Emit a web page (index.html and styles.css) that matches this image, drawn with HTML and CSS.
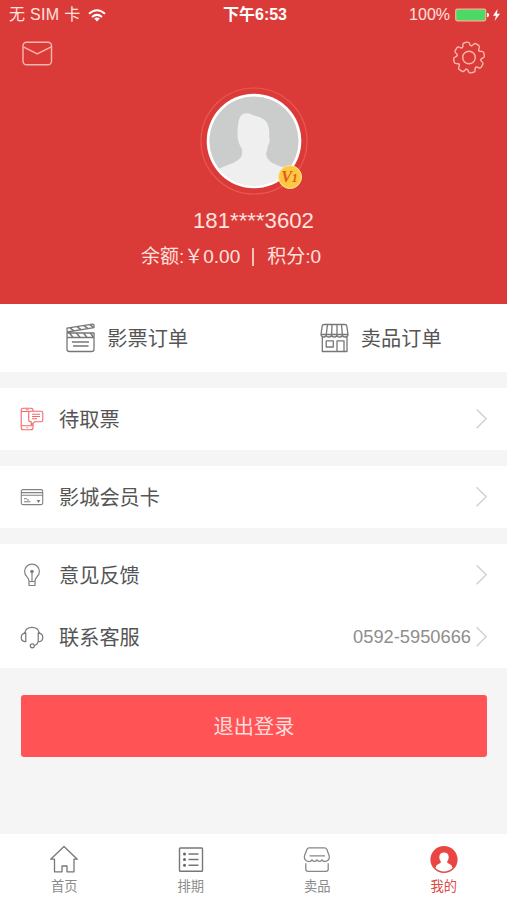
FILE: index.html
```html
<!DOCTYPE html>
<html lang="zh-CN">
<head>
<meta charset="utf-8">
<meta name="viewport" content="width=device-width">
<title>我的</title>
<link rel="stylesheet" href="styles.css">
</head>
<body>
<div class="app">
  <header class="hero">
    <div class="status">
      <div class="status-left">
        <span class="carrier">无 SIM 卡</span>
        <svg class="wifi" width="18" height="13" viewBox="0 0 18 13" fill="none" stroke="#fff" stroke-width="2">
          <path d="M1 4.8Q9-2.2 17 4.8M4 8Q9 3.7 14 8"/><path d="M6.2 9.6Q9 7.4 11.8 9.6L9 12.6Z" fill="#fff" stroke="none"/>
        </svg>
      </div>
      <div class="time">下午6:53</div>
      <div class="status-right">
        <span class="percent">100%</span>
        <svg width="46" height="14" viewBox="0 0 46 14">
          <rect x=".7" y="1.2" width="30" height="11.6" rx="1.5" fill="#4cd964" stroke="#f3b39a" stroke-width="1.2"/>
          <path d="M32 4.8q2.2.2 2.2 2.2T32 9.2z" fill="#fff"/>
          <path d="M42.5 1L38 7.8h3L39.6 13 45 5.8h-3z" fill="#fff"/>
        </svg>
      </div>
    </div>
    <div class="actions">
      <svg class="mail" width="31" height="25" viewBox="0 0 31 25" fill="none" stroke="#fbb5ae" stroke-width="1.4" stroke-linejoin="round">
        <rect x="1" y="1.3" width="28.5" height="22.5" rx="3.5"/><path d="M1.3 5.8L15.2 12.9 29.2 5.8"/>
      </svg>
      <svg class="gear" width="34" height="34" viewBox="-17 -17.5 34 34" fill="none" stroke="#fbb5ae" stroke-width="1.4" stroke-linecap="round">
        <defs><path id="tooth" d="M-4.6-11.1C-3-11.8-3.7-12.6-3.4-13.7Q-3-15.4-1.4-15.4H1.4Q3-15.4 3.4-13.7C3.7-12.6 3-11.8 4.6-11.1"/></defs>
        <g transform="rotate(-12)">
          <use href="#tooth"/><use href="#tooth" transform="rotate(45)"/><use href="#tooth" transform="rotate(90)"/><use href="#tooth" transform="rotate(135)"/>
          <use href="#tooth" transform="rotate(180)"/><use href="#tooth" transform="rotate(225)"/><use href="#tooth" transform="rotate(270)"/><use href="#tooth" transform="rotate(315)"/>
        </g>
        <circle r="6.3"/>
      </svg>
    </div>
    <div class="avatar">
      <svg width="108" height="108" viewBox="0 0 108 108">
        <defs><clipPath id="face"><circle cx="54" cy="54" r="44.6"/></clipPath></defs>
        <circle cx="54" cy="54" r="53" fill="none" stroke="#ea5750" stroke-width="1.2"/>
        <circle cx="54" cy="54" r="47.3" fill="#fff"/>
        <circle cx="54" cy="54" r="44.6" fill="#cbcccc"/>
        <path clip-path="url(#face)" d="M9 88Q17 82 29 77.500Q40 74 42 68V62Q37 55 37.500 45Q38 29 43 27Q48 25 54 28.500Q66 31 68 38Q70 44 69 50Q71 54 68 59Q67 64 66 67Q67 75 78 78.500Q92 83 99 88V104H9Z" fill="#efefef"/>
      </svg>
      <span class="badge">V<small>1</small></span>
    </div>
    <div class="phone">181****3602</div>
    <div class="balance"><span>余额:￥0.00</span><i class="bar"></i><span>积分:0</span></div>
  </header>

  <nav class="orders">
    <a class="order">
      <svg width="32" height="30" viewBox="0 0 32 30" fill="none" stroke="#777" stroke-width="1.3" stroke-linejoin="round">
        <path d="M2 5.2L27.5 1.2Q29 1 29 2.5V4.6L2.200 9ZM2 10H29V14.5H2ZM2 14.5V26.2Q2 28.5 4.3 28.5H26.7Q29 28.5 29 26.2V14.5"/>
        <path d="M5 4.8L9 7.800M12 3.700L16 6.700M19 2.600L23 5.600M25 1.700L28.500 4.300M4.500 10L8 14.500M11.500 10L15 14.500M18.500 10L22 14.500M25.500 10L28.500 14.500" stroke-width="1.500"/>
        <path d="M7 19H24M8 23H23.5"/>
      </svg>
      <span>影票订单</span>
    </a>
    <a class="order">
      <svg width="32" height="30" viewBox="0 0 32 30" fill="none" stroke="#777" stroke-width="1.3" stroke-linejoin="round">
        <path d="M5 1.5H26Q27.5 1.5 27.8 3L29 11.5Q29 14 26.2 14T23.4 12Q23.4 14 20.6 14T18 12Q18 14 15.3 14T12.6 12Q12.6 14 9.8 14T7.2 12Q7 14 4.6 14T2 11.5L3.2 3Q3.5 1.5 5 1.5ZM2 11.5H29M8.5 1.5L7.2 12M13 1.5L12.6 12M18 1.5V12M22.5 1.5L23.4 12M3.3 14V28.5H28V14"/>
        <path d="M7.2 17.8H14.3V24H7.2ZM18 28.5V17.8H25V28.5"/>
      </svg>
      <span>卖品订单</span>
    </a>
  </nav>

  <section class="group">
    <a class="row">
      <svg class="icon" width="24" height="24" viewBox="0 0 24 24" fill="none" stroke="#f3696a" stroke-width="1.1" stroke-linejoin="round">
        <path d="M13 4V3Q13 1.2 11 1.2H3.2Q1.2 1.2 1.2 3.2V20.8Q1.2 22.8 3.2 22.8H11Q13 22.8 13 20.8V17M1.2 4.5H9.5M1.2 18.8H13M6 2.8H8.5M6.5 20.8H7.8"/>
        <path d="M10.5 4.2H21Q22.8 4.2 22.8 6V13Q22.8 14.8 21 14.8H14.5L11.2 18V14.8Q8.7 14.8 8.7 13V6Q8.7 4.2 10.5 4.2M12 7.2H20M12 9.5H20M12 11.8H17"/>
      </svg>
      <span class="label">待取票</span>
      <svg class="chevron" width="12" height="22" viewBox="0 0 12 22"><path d="M.6 1.2L10.2 10.7.6 20.3"/></svg>
    </a>
  </section>

  <section class="group">
    <a class="row">
      <svg class="icon" width="24" height="24" viewBox="0 0 24 24" fill="none" stroke="#818181" stroke-width="1.1">
        <rect x="1.3" y="4.6" width="21.4" height="15" rx="1.5"/><path d="M1.3 7.6H22.7M1.3 10.2H22.7M4 13.8H7M4 16.8H10.5M7 15H9"/><path d="M17.500 15.500H19.500L18.500 17Z" fill="#777"/>
      </svg>
      <span class="label">影城会员卡</span>
      <svg class="chevron" width="12" height="22" viewBox="0 0 12 22"><path d="M.6 1.2L10.2 10.7.6 20.3"/></svg>
    </a>
  </section>

  <section class="group">
    <a class="row">
      <svg class="icon" width="24" height="24" viewBox="0 0 24 24" fill="none" stroke="#818181" stroke-width="1.2">
        <path d="M9 18.5Q9 15.8 7 13.8Q4.6 11.5 4.6 8.5A7.4 7.4 0 0 1 19.4 8.5Q19.4 11.5 17 13.8Q15 15.8 15 18.5ZM9 18.5V22.5H15V18.5M12 8V18.5"/><circle cx="12" cy="8.6" r="1.2" fill="#777"/>
      </svg>
      <span class="label">意见反馈</span>
      <svg class="chevron" width="12" height="22" viewBox="0 0 12 22"><path d="M.6 1.2L10.2 10.7.6 20.3"/></svg>
    </a>
    <a class="row">
      <svg class="icon" width="24" height="24" viewBox="0 0 24 24" fill="none" stroke="#777" stroke-width="1.2">
        <path d="M4.5 8.3A7.7 7.7 0 0 1 19.5 8.3M5.8 8.2V16.6Q1.2 16.6 1.2 12.4T5.8 8.2ZM18.2 8.2V16.6Q22.8 16.6 22.8 12.4T18.2 8.2ZM18.2 16.6Q17 20 14.5 20.5"/><circle cx="12.3" cy="20.8" r="2"/>
      </svg>
      <span class="label">联系客服</span>
      <span class="value">0592-5950666</span>
      <svg class="chevron" width="12" height="22" viewBox="0 0 12 22"><path d="M.6 1.2L10.2 10.7.6 20.3"/></svg>
    </a>
  </section>

  <button class="logout">退出登录</button>

  <nav class="tabs">
    <a class="tab">
      <svg width="30" height="30" viewBox="0 0 30 30" fill="none" stroke="#777" stroke-width="1.3" stroke-linejoin="round">
        <path d="M15 2.500L28.3 15.200H25V27.800H18V22H13V27.800H5.500V15.200H1.700Z"/>
      </svg>
      <span>首页</span>
    </a>
    <a class="tab">
      <svg width="30" height="30" viewBox="0 0 30 30" fill="none" stroke="#777" stroke-width="1.4">
        <rect x="3.5" y="4" width="23" height="23.3" rx=".8"/><path d="M12.5 10H22.5M12.5 15.500H22.5M12.5 21.200H22.5"/>
        <g fill="#666" stroke="none"><circle cx="8.5" cy="10" r="1.5"/><circle cx="8.5" cy="15.5" r="1.5"/><circle cx="8.5" cy="21.2" r="1.5"/></g>
      </svg>
      <span>排期</span>
    </a>
    <a class="tab">
      <svg width="30" height="30" viewBox="0 0 30 30" fill="none" stroke="#888" stroke-width="1.3" stroke-linejoin="round">
        <path transform="translate(0 .8)" d="M7 3H22.5Q24 3 24.8 4.5L27.2 11Q28 14.8 24.5 16.4Q21.5 17.5 20 15Q17.5 18.2 15 15Q12.5 18.2 10 15Q8.5 17.5 5.2 16.4Q1.8 14.8 2.5 11L5 4.5Q5.5 3 7 3ZM7.5 11H23M3.8 18.5V24.5Q3.8 26.5 6 26.5H24Q26.2 26.5 26.2 24.5V18.5"/>
      </svg>
      <span>卖品</span>
    </a>
    <a class="tab active">
      <svg width="30" height="30" viewBox="0 0 30 30">
        <circle cx="15" cy="15.500" r="13.6" fill="#e94543"/>
        <path transform="translate(0 .5)" d="M15 8Q19.7 8 19.7 12.8Q19.7 15.4 18 17.3Q18.200 18.800 20 19.300Q23 20.200 23.600 23.600Q20 27 15 27T6.400 23.600Q7 20.200 10 19.300Q11.800 18.800 12 17.300Q10.300 15.400 10.300 12.800Q10.300 8 15 8Z" fill="#fff"/>
      </svg>
      <span>我的</span>
    </a>
  </nav>
</div>
</body>
</html>
```

FILE: styles.css
```css
* { box-sizing: border-box; }
body {
  margin: 0;
  background: #f5f5f5;
  color: #555;
  font-family: "Liberation Sans", "Noto Sans CJK SC", sans-serif;
}
svg { display: block; flex: none; }
.app { display: flex; flex-direction: column; height: 900px; overflow: hidden; }

.hero { height: 304px; flex: none; background: #db3b38; color: #ffe2df; }
.status {
  display: grid;
  grid-template-columns: 1fr auto 1fr;
  align-items: center;
  height: 30px;
  padding: 0 6px 0 9px;
  font-size: 16px;
  line-height: 30px;
  white-space: nowrap;
}
.status-left, .status-right { display: flex; align-items: center; }
.status-left { gap: 8px; }
.carrier { letter-spacing: .3px; }
.status-right { justify-content: flex-end; gap: 5px; }
.time { color: #fff; font-weight: bold; }
.actions { display: flex; justify-content: space-between; height: 57px; padding: 11px 21px 0 22px; }
.gear { margin-top: -1px; }

.avatar { position: relative; width: 108px; margin: 0 auto; }
.badge {
  position: absolute;
  left: 78px;
  top: 78px;
  width: 24px;
  height: 24px;
  border: 1px solid #ffe3a0;
  border-radius: 50%;
  background: #fec83e;
  color: #e4572c;
  font: italic bold 16px/22px "Liberation Serif", serif;
  text-align: center;
}
.badge small { font-size: 12px; }
.phone { margin-top: 11px; font-size: 22.2px; line-height: 30px; text-align: center; }
.balance {
  display: flex;
  align-items: center;
  height: 30px;
  margin-top: 6px;
  padding-left: 141px;
  font-size: 19px;
  line-height: 30px;
}
.bar { width: 2px; height: 18px; margin: 0 13px 0 12px; background: #f9c1bc; }

.orders { display: flex; height: 68px; flex: none; background: #fff; }
.order { display: flex; flex: 1; align-items: center; justify-content: center; gap: 10px; font-size: 20.2px; }
.order span { margin-top: -2px; }

.group { flex: none; margin-top: 16px; background: #fff; }
.row { display: flex; align-items: center; height: 62px; padding: 0 19px 0 20px; }
.label { margin: -2px auto 0 15px; font-size: 20.2px; }
.value { margin-right: 5px; color: #8e8e8e; font-size: 18.3px; }
.chevron { fill: none; stroke: #d0d0d0; stroke-width: 1.4; }

.logout {
  flex: none;
  height: 62px;
  margin: 27px 20px 0 21px;
  padding: 3px 0 0;
  border: 0;
  border-radius: 3px;
  background: #ff5355;
  color: #ffdcdc;
  font: 20.2px/59px "Liberation Sans", "Noto Sans CJK SC", sans-serif;
}

.tabs { display: flex; flex: none; height: 66px; margin-top: auto; padding-left: 1px; background: #fff; }
.tab {
  display: flex;
  flex: 1;
  flex-direction: column;
  align-items: center;
  padding-top: 10px;
  color: #8b8b8b;
  font-size: 13.3px;
  line-height: 22px;
}
.tab span { margin-top: 2px; }
.active { color: #e04a48; }
```
